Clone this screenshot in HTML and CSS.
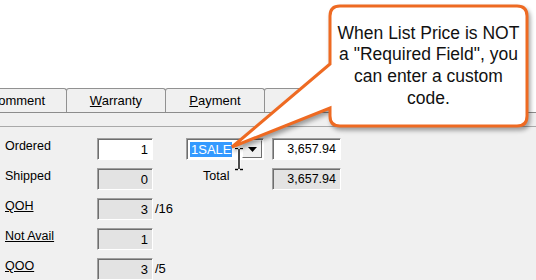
FILE: index.html
```html
<!DOCTYPE html>
<html lang="en">
<head>
    <meta charset="UTF-8">
    <title>Line Item - Price Code</title>
    <link rel="stylesheet" href="styles.css">
</head>
<body>
    <div class="screen">
        <div class="top"></div>

        <div class="tabs">
            <div class="tab">Comment</div>
            <div class="tab"><u>W</u>arranty</div>
            <div class="tab"><u>P</u>ayment</div>
            <div class="tab"></div>
        </div>

        <div class="panel">
            <div class="band"></div>
            <div class="form">
                <span class="label">Ordered</span>
                <span class="box edit">1</span>
                <div class="combo">
                    <span class="sel">1SALE</span>
                    <span class="drop">
                        <svg width="9" height="5" viewBox="0 0 9 5"><path d="M0,0 H9 L4.5,5 Z" fill="#000"/></svg>
                    </span>
                </div>
                <span class="box edit price">3,657.94</span>

                <span class="label">Shipped</span>
                <span class="box">0</span>
                <span class="label total">Total</span>
                <span class="box price">3,657.94</span>

                <span class="label link">QOH</span>
                <span class="box">3</span>
                <span class="suffix">/16</span>

                <span class="label link">Not Avail</span>
                <span class="box">1</span>

                <span class="label link">QOO</span>
                <span class="box">3</span>
                <span class="suffix">/5</span>
            </div>
        </div>

        <!-- callout bubble -->
        <svg class="bubble" width="536" height="200" viewBox="0 0 536 200">
            <path d="M340,6 H517 Q527,6 527,16 V116 Q527,126 517,126 H340 Q330,126 330,116 V108 L232,147 L330,64 V16 Q330,6 340,6 Z"
                  fill="#fff" stroke="#ee6a22" stroke-width="3" stroke-linejoin="miter"/>
        </svg>
        <div class="bubble-text">When List Price is NOT a "Required Field", you can enter a custom code.</div>

        <!-- text cursor -->
        <svg class="ibeam" width="10" height="24" viewBox="0 0 10 24">
            <path d="M1,1.5 H4 M6,1.5 H9 M5,2 V22 M1,22.5 H4 M6,22.5 H9" stroke="#fff" stroke-width="3"/>
            <path d="M1,1.5 H4 M6,1.5 H9 M5,2 V22 M1,22.5 H4 M6,22.5 H9" stroke="#000" stroke-width="1.4"/>
        </svg>
    </div>
</body>
</html>
```

FILE: styles.css
```css
html, body {
    margin: 0;
    padding: 0;
}
body {
    font-family: "Liberation Sans", Arial, sans-serif;
    font-size: 12.5px;
    color: #000;
    background-color: #f0f0f0;
    width: 536px;
    height: 280px;
    overflow: hidden;
}
.screen {
    position: relative;
    width: 536px;
    height: 280px;
    overflow: hidden;
}
.top {
    height: 88px;
    background-color: #fff;
}
.tabs {
    display: flex;
    margin-left: -33px;
    height: 24px;
    background-color: #fff;
}
.tab {
    flex: 0 0 100px;
    box-sizing: border-box;
    height: 24px;
    margin-right: -1px;
    border: 1px solid #919191;
    border-bottom: none;
    border-radius: 3px 3px 0 0;
    background-color: #f0f0f0;
    font-size: 13px;
    line-height: 23px;
    text-align: center;
}
.panel {
    border-top: 1px solid #8c8c8c;
}
.band {
    height: 13px;
    border-bottom: 1px solid #a9a9a9;
}
.form {
    display: grid;
    grid-template-columns: 92px 56px 33px 78px 8px 69px;
    grid-auto-rows: 22px;
    row-gap: 8px;
    padding: 11px 0 0 5px;
}
.label {
    grid-column: 1;
    line-height: 16px;
}
.link {
    text-decoration: underline;
}
.box {
    grid-column: 2;
    box-sizing: border-box;
    height: 22px;
    border: 1px solid;
    border-color: #a0a0a0 #fff #fff #a0a0a0;
    box-shadow: inset 1px 1px 0 #6e6e6e;
    background-color: #e3e3e3;
    text-align: right;
    padding-right: 4px;
    font-size: 13px;
    line-height: 21px;
}
.edit {
    background-color: #fff;
}
.price {
    grid-column: 6;
    font-size: 12.5px;
}
.suffix {
    grid-column: 3;
    padding-left: 2px;
    font-size: 13px;
    line-height: 21px;
}
.total {
    grid-column: 4;
    padding-left: 17px;
    line-height: 17px;
}
.combo {
    grid-column: 4;
    display: flex;
    align-items: center;
    justify-content: space-between;
    box-sizing: border-box;
    height: 22px;
    border: 1px solid;
    border-color: #a0a0a0 #fff #fff #a0a0a0;
    box-shadow: inset 1px 1px 0 #6e6e6e;
    background-color: #fff;
    padding: 1px 1px 1px 3px;
}
.sel {
    background-color: #3399ff;
    color: #fff;
    padding: 0 1px;
    font-size: 13px;
    line-height: 15px;
}
.drop {
    box-sizing: border-box;
    display: flex;
    align-items: center;
    justify-content: center;
    width: 20px;
    height: 18px;
    border: 1px solid;
    border-color: #fff #6e6e6e #6e6e6e #fff;
    background-color: #f0f0f0;
}
.bubble {
    position: absolute;
    left: 0;
    top: 0;
    filter: drop-shadow(2px 3px 2px rgba(0, 0, 0, 0.35));
}
.bubble-text {
    position: absolute;
    left: 332px;
    top: 8px;
    width: 193px;
    height: 116px;
    display: flex;
    align-items: center;
    justify-content: center;
    text-align: center;
    font-size: 17.5px;
    line-height: 21.7px;
    color: #111;
}
.ibeam {
    position: absolute;
    left: 234px;
    top: 147px;
}
```
